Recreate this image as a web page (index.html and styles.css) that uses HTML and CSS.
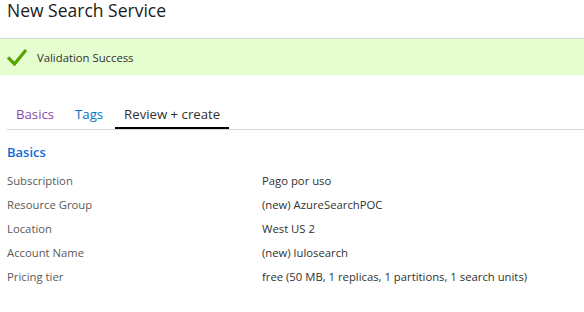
FILE: index.html
```html
<!DOCTYPE html>
<html lang="en">

<head>
    <meta charset="UTF-8">
    <title>New Search Service</title>
    <link rel="stylesheet" href="styles.css">
</head>

<body>
    <h1 class="page-title">New Search Service</h1>
    <div class="banner">
        <svg class="banner-icon" width="20" height="18" viewBox="0 0 20 18">
            <path d="M1 9.5 L7.5 16 L19 2" fill="none" stroke="#57a300" stroke-width="3.2" stroke-linejoin="miter"/>
        </svg>
        <span class="banner-text">Validation Success</span>
    </div>
    <div class="tabs">
        <a class="tab tab-visited">Basics</a>
        <a class="tab">Tags</a>
        <a class="tab tab-active">Review + create</a>
    </div>
    <h2 class="section-title">Basics</h2>
    <div class="summary">
        <div class="summary-label">Subscription</div>
        <div class="summary-value">Pago por uso</div>
        <div class="summary-label">Resource Group</div>
        <div class="summary-value">(new) AzureSearchPOC</div>
        <div class="summary-label">Location</div>
        <div class="summary-value">West US 2</div>
        <div class="summary-label">Account Name</div>
        <div class="summary-value">(new) lulosearch</div>
        <div class="summary-label">Pricing tier</div>
        <div class="summary-value">free (50 MB, 1 replicas, 1 partitions, 1 search units)</div>
    </div>
</body>

</html>
```

FILE: styles.css
```css
html,
body {
    margin: 0;
    padding: 0;
}

body {
    font-family: 'Open Sans', 'Noto Sans', Arial, sans-serif;
    background: #fff;
    color: #323130;
    width: 584px;
    height: 312px;
    overflow: hidden;
}

.page-title {
    margin: 0;
    height: 38px;
    padding: 0 7px;
    font-size: 17.5px;
    font-weight: 400;
    line-height: 20px;
    color: #1b1b1b;
}

.banner {
    border-top: 1px solid #d6d6d6;
    background: #e5fdcf;
    height: 36px;
    display: flex;
    align-items: center;
    padding-left: 7px;
}

.banner-icon {
    margin-right: 10px;
    display: block;
}

.banner-text {
    font-size: 11.3px;
    color: #323130;
}

.tabs {
    display: flex;
    gap: 3px;
    margin: 24px 0 0 7px;
    border-bottom: 1px solid #d6d6d6;
}

.tab {
    display: block;
    padding: 2px 9px 0 9px;
    font-size: 13.2px;
    line-height: 26px;
    color: #0072c6;
    border-bottom: 2px solid transparent;
}

.tab-visited {
    color: #8a4bab;
}

.tab-active {
    color: #323130;
    border-bottom-color: #000;
}

.section-title {
    margin: 12px 0 0 7px;
    font-size: 13px;
    font-weight: 600;
    line-height: 20px;
    color: #0f6bd6;
}

.summary {
    display: grid;
    grid-template-columns: 255px 1fr;
    margin: 7px 0 0 7px;
    font-size: 11.3px;
    line-height: 24px;
}

.summary-label {
    color: #595959;
}

.summary-value {
    color: #323130;
}
```
